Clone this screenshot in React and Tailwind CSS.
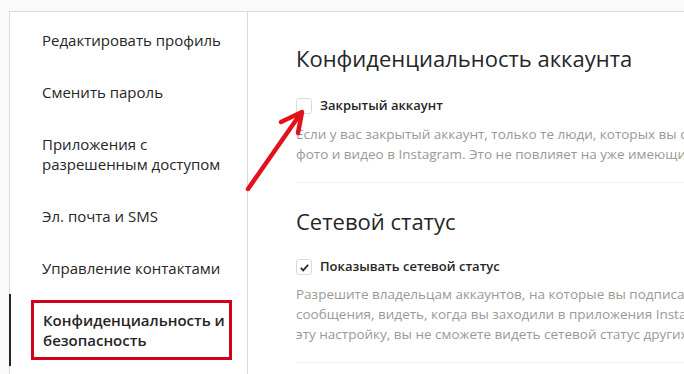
import React from 'react';

const menu = [
  { t: 'Редактировать профиль', h: 'h-[52px]' },
  { t: 'Сменить пароль', h: 'h-[52px]' },
  { t: 'Приложения с разрешенным доступом', h: 'h-[72px]' },
  { t: 'Эл. почта и SMS', h: 'h-[52px]' },
  { t: 'Управление контактами', h: 'h-[52px]' },
];

const Arrow = () => (
  <svg className="absolute left-0 top-0 pointer-events-none" width="684" height="374" viewBox="0 0 684 374">
    <g stroke="#e3111b" strokeWidth="4.5" strokeLinecap="round" fill="none">
      <line x1="248" y1="189" x2="301" y2="113" />
      <polyline points="281,122 302,112 298,133" strokeLinejoin="round" />
    </g>
  </svg>
);

function Checkbox({ checked }) {
  return (
    <span className="w-4 h-4 rounded-[3px] border border-[#dbdbdb] bg-white flex items-center justify-center shrink-0">
      {checked && (
        <svg width="11" height="11" viewBox="0 0 12 12">
          <path d="M2 6.5l2.6 2.6L10 3" stroke="#262626" strokeWidth="2" fill="none" />
        </svg>
      )}
    </span>
  );
}

export default function App() {
  return (
    <div className="relative w-[684px] h-[374px] overflow-hidden bg-[#fafafa] pt-[11px] pl-[9px]" style={{ fontFamily: '"Open Sans", "Noto Sans", sans-serif' }}>
      <div className="flex h-full bg-white border-t border-l border-[#dbdbdb]">
        {/* боковое меню */}
        <div className="w-[238px] shrink-0 border-r border-[#dbdbdb] flex flex-col pt-[2px] text-[15px] text-[#262626] leading-[20px]">
          {menu.map((m, i) => (
            <div key={i} className={`${m.h} pl-[30px] pr-4 flex items-center border-l-2 border-transparent`}>
              <span className={i === 2 ? 'max-w-[180px]' : ''}>{m.t}</span>
            </div>
          ))}
          <div className="h-[72px] flex items-center border-l-2 border-[#262626] -ml-px pl-[20px]">
            <div className="border-[3px] border-[#d0021b] w-[201px] h-[60px] flex items-center pl-[9px] font-semibold">
              Конфиденциальность и безопасность
            </div>
          </div>
        </div>

        {/* основной блок */}
        <div className="flex-1 pl-[48px] overflow-hidden">
          <div className="w-[600px]">
            <h2 className="mt-[31px] text-[22px] leading-[30px] text-[#262626]">Конфиденциальность аккаунта</h2>
            <label className="mt-[25px] flex items-center gap-2 h-4">
              <Checkbox />
              <span className="text-[13px] font-semibold text-[#262626]">Закрытый аккаунт</span>
            </label>
            <p className="mt-[10px] text-[13.5px] leading-[20px] text-[#999] whitespace-nowrap">
              Если у вас закрытый аккаунт, только те люди, которых вы одобрите, смогут видеть ваши<br />
              фото и видео в Instagram. Это не повлияет на уже имеющихся подписчиков.
            </p>
            <div className="mt-[18px] border-t border-[#efefef]" />

            <h2 className="mt-[23px] text-[22px] leading-[30px] text-[#262626]">Сетевой статус</h2>
            <label className="mt-[23px] flex items-center gap-2 h-4">
              <Checkbox checked />
              <span className="text-[13px] font-semibold text-[#262626]">Показывать сетевой статус</span>
            </label>
            <p className="mt-[9px] text-[13.5px] leading-[20px] text-[#999] whitespace-nowrap">
              Разрешите владельцам аккаунтов, на которые вы подписаны, и всем, кому вы отправляете<br />
              сообщения, видеть, когда вы заходили в приложения Instagram. Если вы отключите<br />
              эту настройку, вы не сможете видеть сетевой статус других аккаунтов.
            </p>
            <div className="mt-[18px] border-t border-[#efefef]" />
          </div>
        </div>
      </div>
      <Arrow />
    </div>
  );
}
